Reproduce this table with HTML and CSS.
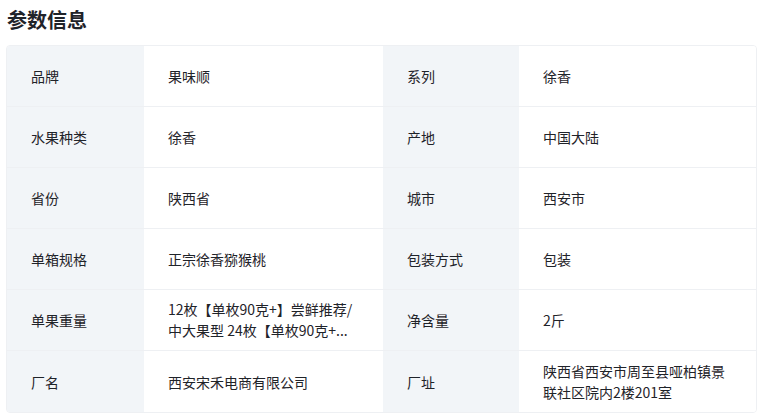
FILE: index.html
```html
<!DOCTYPE html>
<html lang="zh-CN">
<head>
<meta charset="utf-8">
<link rel="stylesheet" href="styles.css">
</head>
<body>
<div class="page">
  <h2 class="title">参数信息</h2>
  <div class="table">
    <div class="cell label">品牌</div><div class="cell value">果味顺</div><div class="cell label">系列</div><div class="cell value">徐香</div>
    <div class="cell label">水果种类</div><div class="cell value">徐香</div><div class="cell label">产地</div><div class="cell value">中国大陆</div>
    <div class="cell label">省份</div><div class="cell value">陕西省</div><div class="cell label">城市</div><div class="cell value">西安市</div>
    <div class="cell label">单箱规格</div><div class="cell value">正宗徐香猕猴桃</div><div class="cell label">包装方式</div><div class="cell value">包装</div>
    <div class="cell label">单果重量</div><div class="cell value"><span class="multi">12枚【单枚90克+】尝鲜推荐/<br>中大果型 24枚【单枚90克+...</span></div><div class="cell label">净含量</div><div class="cell value">2斤</div>
    <div class="cell label last">厂名</div><div class="cell value last">西安宋禾电商有限公司</div><div class="cell label last">厂址</div><div class="cell value last"><span class="multi">陕西省西安市周至县哑柏镇景<br>联社区院内2楼201室</span></div>
  </div>
</div>
</body>
</html>
```
FILE: styles.css
```css
html, body {
  margin: 0;
  padding: 0;
  background: #ffffff;
}
body {
  font-family: "Noto Sans CJK SC", "Noto Sans", sans-serif;
  color: #1f2329;
}
.page {
  padding: 5px 17px 0 6px;
}
.title {
  margin: 0 0 10px 1px;
  font-size: 20px;
  line-height: 30px;
  font-weight: 700;
  color: #1f2329;
}
.table {
  display: grid;
  grid-template-columns: 137px 239px 136px 1fr;
  grid-auto-rows: 61px;
  border: 1px solid #eef0f3;
  border-radius: 4px;
  overflow: hidden;
  width: 751px;
  box-sizing: border-box;
}
.cell {
  display: flex;
  align-items: center;
  padding: 0 20px 0 24px;
  font-size: 14px;
  line-height: 20px;
  color: #1f2329;
  border-bottom: 1px solid #eef0f3;
  box-sizing: border-box;
  white-space: nowrap;
}
.cell.last {
  border-bottom: none;
}
.label {
  background: #f2f5f8;
}
.value {
  background: #ffffff;
}
.multi {
  display: block;
  line-height: 21px;
}
```
